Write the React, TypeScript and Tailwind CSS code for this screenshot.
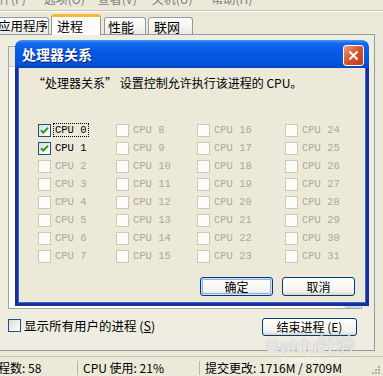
import React from 'react';

const cjk = "font-['Noto_Sans_CJK_SC','Liberation_Sans',sans-serif]";
const mono = "font-['Liberation_Mono','Noto_Sans_CJK_SC',monospace]";

// column widths of the CPU grid, from left to right
const colWidths = ['w-[78px]', 'w-[81px]', 'w-[88px]', 'w-[80px]'];

function Check() {
  return (
    <svg width="11" height="11" viewBox="0 0 11 11">
      <path d="M2 5.2 L4.3 7.6 L9 2.8" fill="none" stroke="#21A121" strokeWidth="2" />
    </svg>
  );
}

function CpuBox({ n }: { n: number }) {
  const enabled = n < 2;
  return (
    <div className="flex h-[18px] items-center">
      <div
        className={
          enabled
            ? 'flex h-[13px] w-[13px] items-center justify-center border border-[#1C5180] bg-[linear-gradient(135deg,#DCDCD7,#FFFFFF)]'
            : 'h-[13px] w-[13px] border border-[#CAC8BB] bg-[#FBFBF8]'
        }
      >
        {enabled && <Check />}
      </div>
      <span
        className={`ml-[2px] px-px text-[10.5px] leading-[12px] ${mono} ${
          enabled ? 'text-black' : 'text-[#ACA899]'
        } ${n === 0 ? 'border border-dotted border-black' : 'border border-transparent'}`}
      >
        CPU {n}
      </span>
    </div>
  );
}

function XpButton({ label, primary, className }: { label: string; primary?: boolean; className: string }) {
  return (
    <div
      className={`flex items-center justify-center rounded-[3px] border border-[#003C74] bg-[linear-gradient(to_bottom,#FFFFFF,#F3F2EC_80%,#D8D2C6)] text-[12px] leading-none text-black ${
        primary ? 'shadow-[inset_0_0_0_1px_#CFE0FA,inset_0_0_0_2px_#8DB2E8]' : ''
      } ${className}`}
    >
      {label}
    </div>
  );
}

export default function App() {
  return (
    <div className={`relative h-[376px] w-[383px] overflow-hidden bg-[#ECE9D8] text-black ${cjk}`}>
      {/* menu bar, cut off at the top */}
      <div className="h-[11px] overflow-hidden border-b border-[#C9C6B6] shadow-[0_1px_0_#FFFFFF]">
        <div className="-ml-[13px] -mt-[8px] flex text-[12px] leading-[14px] text-[#7D7D7D]">
          <span className="mr-[18px]">文件(F)</span>
          <span className="mr-[13px]">选项(O)</span>
          <span className="mr-[15px]">查看(V)</span>
          <span className="mr-[19px]">关机(U)</span>
          <span>帮助(H)</span>
        </div>
      </div>

      {/* tabs */}
      <div className="relative z-10 -ml-[8px] mt-[3px] flex h-[20px] items-end text-[12px]">
        <div className="flex h-[17px] w-[57px] items-center rounded-t-[3px] border border-b-0 border-[#919B9C] bg-[linear-gradient(to_bottom,#FFFFFF,#ECEBE5)] pl-[5px] text-[12.5px] leading-none">
          应用程序
        </div>
        <div className="-mb-px ml-[2px] flex h-[21px] w-[50px] items-start rounded-t-[3px] border border-b-0 border-[#919B9C] border-t-[3px] border-t-[#F5B93C] bg-[#FCFCFA] pl-[5px] pt-[2px] text-[13px] leading-none">
          进程
        </div>
        <div className="ml-[3px] flex h-[17px] w-[42px] items-center rounded-t-[3px] border border-b-0 border-[#919B9C] bg-[linear-gradient(to_bottom,#FFFFFF,#ECEBE5)] pl-[3px] text-[13px] leading-none">
          性能
        </div>
        <div className="ml-[2px] flex h-[17px] w-[45px] items-center rounded-t-[3px] border border-b-0 border-[#919B9C] bg-[linear-gradient(to_bottom,#FFFFFF,#ECEBE5)] pl-[5px] text-[13px] leading-none">
          联网
        </div>
      </div>

      {/* tab panel */}
      <div className="-ml-[2px] flex h-[317px] w-[377px] flex-col border border-[#919B9C] bg-[#EFEDE2] pl-[9px] pt-[11px]">
        {/* process list, hidden by the dialog except for its edges */}
        <div className="flex h-[263px] w-[354px] overflow-hidden border border-[#A7A69B] bg-white">
          <div className="flex flex-1 flex-col justify-between overflow-hidden">
            <div className="h-[20px] border-b border-[#D5D2C4] bg-[#EBEADB]" />
            <div className="-mb-[9px] flex h-[12px] items-center pl-[40px]">
              <div className="h-[3px] w-[6px] bg-[#222]" />
              <div className="ml-[62px] h-[3px] w-[34px] bg-[#333]" />
              <div className="ml-[79px] h-[3px] w-[8px] bg-[#333]" />
              <div className="ml-[36px] h-[3px] w-[3px] bg-[#333]" />
              <div className="ml-[14px] h-[3px] w-[22px] bg-[#333]" />
            </div>
          </div>
          <div className="flex w-[17px] flex-col bg-[#F3F1EC] pt-[20px]">
            <div className="mx-px flex-1 rounded-[2px] bg-[#C3D3FB]" />
          </div>
        </div>

        <div className="mt-[9px] flex items-start">
          <div className="mt-px h-[13px] w-[13px] border border-[#1C5180] bg-[linear-gradient(135deg,#DCDCD7,#FFFFFF)]" />
          <span className="ml-[3px] text-[12.5px] leading-[15px]">
            显示所有用户的进程 (<span className="underline">S</span>)
          </span>
          <XpButton label="结束进程 (E)" className="ml-auto mr-[17px] h-[18px] w-[95px]" />
        </div>
      </div>

      {/* status bar */}
      <div className="mt-[5px] flex h-[20px] items-end border-t border-[#C7C3B1] pb-px text-[12px] leading-[14px]">
        <div className="-ml-[14px] w-[92px] border-r border-[#B9B5A3]">进程数: 58</div>
        <div className="w-[122px] border-r border-[#B9B5A3] pl-[5px]">CPU 使用: 21%</div>
        <div className="pl-[5px]">提交更改: 1716M / 8709M</div>
      </div>
      <div className="absolute bottom-[2px] right-[3px] grid grid-cols-3 gap-px">
        {[0, 1, 2, 3, 4, 5, 6, 7, 8].map((i) => (
          <div key={i} className={`h-[2px] w-[2px] ${i === 2 || i === 4 || i === 5 || i >= 6 ? 'bg-[#B2AE9C]' : 'bg-transparent'}`} />
        ))}
      </div>

      {/* watermark */}
      <div className="pointer-events-none absolute left-[266px] top-[336px] flex flex-col items-center">
        <span className="font-['Liberation_Sans','Noto_Sans_CJK_SC',sans-serif] text-[19px] font-bold leading-[20px] text-white/75 [text-shadow:0_0_1px_#9A9A9A]">
          Bai<span className="tracking-tighter">du</span>经验
        </span>
        <span className="font-['Liberation_Sans',sans-serif] text-[7px] leading-[8px] text-white/80">jingyan.baidu.com</span>
      </div>

      {/* processor affinity dialog */}
      <div className="absolute left-[15px] top-[40px] flex h-[266px] w-[354px] flex-col">
        <div className="relative flex h-[28px] items-center rounded-t-[7px] bg-[linear-gradient(to_bottom,#4A95F6_0%,#1368EC_12%,#0558E6_45%,#0454DE_80%,#0345C0_100%)] pl-[7px]">
          <span className="text-[14px] font-bold leading-none text-white [text-shadow:1px_1px_0_#0A1E6A]">处理器关系</span>
          <div className="absolute right-[5px] top-[5px] flex h-[21px] w-[21px] items-center justify-center rounded-[3px] border border-white bg-[linear-gradient(135deg,#EE9B7B,#D6532C_50%,#BC3A18)]">
            <svg width="11" height="11" viewBox="0 0 11 11">
              <path d="M1.5 1.5 L9.5 9.5 M9.5 1.5 L1.5 9.5" stroke="#FFFFFF" strokeWidth="2" />
            </svg>
          </div>
        </div>
        <div className="flex flex-1 flex-col border-x-[3px] border-b-[3px] border-[#16309A] bg-[#ECE9D8] shadow-[inset_1px_0_0_#3D64D6,inset_-1px_0_0_#3D64D6,inset_0_-1px_0_#3D64D6]">
          <div className="pl-[15px] pt-[8px] text-[12px] leading-[14px]">
            “处理器关系” 设置控制允许执行该进程的 CPU。
          </div>
          <div className="mt-[31px] flex pl-[20px]">
            {[0, 1, 2, 3].map((c) => (
              <div key={c} className={`flex flex-col ${colWidths[c]}`}>
                {[0, 1, 2, 3, 4, 5, 6, 7].map((r) => (
                  <CpuBox key={r} n={c * 8 + r} />
                ))}
              </div>
            ))}
          </div>
          <div className="mt-[12px] flex justify-end gap-[9px] pr-[11px]">
            <XpButton label="确定" primary className="h-[19px] w-[73px]" />
            <XpButton label="取消" className="h-[19px] w-[73px]" />
          </div>
        </div>
      </div>
    </div>
  );
}
